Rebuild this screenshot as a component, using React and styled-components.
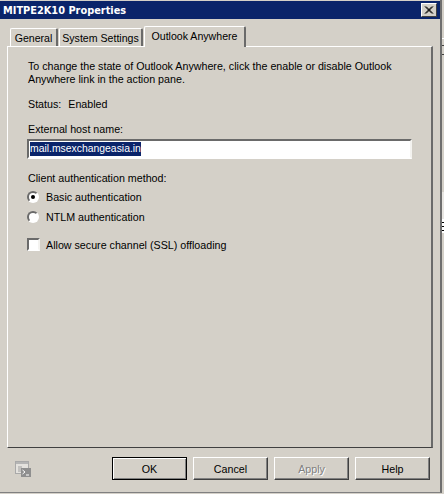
import React from "react";
import styled, { createGlobalStyle } from "styled-components";

const Global = createGlobalStyle`
  html, body { margin: 0; padding: 0; background: #d4d0c8; }
  #root { width: 444px; height: 494px; overflow: hidden; }
  * { box-sizing: border-box; }
`;

const Screen = styled.div`
  width: 444px;
  height: 494px;
  display: flex;
  background: #d4d0c8;
  font-family: "Liberation Sans", Arial, sans-serif;
  font-size: 10.7px;
  color: #000;
`;

const Dialog = styled.div`
  width: 442px;
  height: 493px;
  display: flex;
  flex-direction: column;
  background: #d4d0c8;
  border-right: 2px solid #6f6f6f;
  border-bottom: 1px solid #808080;
  padding-top: 1px;
`;

const Side = styled.div`
  flex: 1;
  display: flex;
  flex-direction: column;
`;

const SideStrip = styled.div`
  height: ${(p) => p.$h}px;
  background: ${(p) => p.$c};
`;

const TitleBar = styled.div`
  height: 18px;
  flex: none;
  background: #0a246a;
  color: #fff;
  display: flex;
  align-items: center;
  justify-content: space-between;
  padding: 0 3px 0 3px;
  font-family: "DejaVu Sans", sans-serif;
  font-weight: 700;
  font-size: 9.8px;
`;

const CloseButton = styled.div`
  width: 16px;
  height: 14px;
  background: #d4d0c8;
  border: 1px solid;
  border-color: #fff #404040 #404040 #fff;
  display: flex;
  align-items: center;
  justify-content: center;
`;

const TabStrip = styled.div`
  display: flex;
  align-items: flex-end;
  gap: 1px;
  height: 27px;
  flex: none;
  padding-left: 10px;
  position: relative;
  z-index: 1;
`;

const Tab = styled.div`
  height: ${(p) => (p.$active ? 21 : 18)}px;
  width: ${(p) => p.$w}px;
  margin-bottom: ${(p) => (p.$active ? -1 : 0)}px;
  background: #d4d0c8;
  border-top: 1px solid #fff;
  border-left: 1px solid #fff;
  border-right: 2px solid #6a6a6a;
  border-radius: 2px 2px 0 0;
  display: flex;
  align-items: ${(p) => (p.$active ? "flex-start" : "center")};
  justify-content: center;
  padding-top: ${(p) => (p.$active ? 3 : 0)}px;
  white-space: nowrap;
  font-size: 10.6px;
`;

const Panel = styled.div`
  margin: 0 7px 0 7px;
  height: 402px;
  flex: none;
  border-style: solid;
  border-width: 1px 2px 1px 1px;
  border-color: #fff #6a6a6a #404040 #fff;
  padding: 13px 19px 0 20px;
  display: flex;
  flex-direction: column;
`;

const Paragraph = styled.p`
  margin: 0;
  line-height: 13px;
  width: 372px;
`;

const Status = styled.div`
  margin-top: 12px;
  display: flex;
  gap: 7px;
  line-height: 13px;
`;

const Label = styled.div`
  line-height: 13px;
  margin-top: ${(p) => p.$mt}px;
`;

const HostInput = styled.div`
  margin-top: 3px;
  height: 20px;
  width: 385px;
  margin-left: -1px;
  background: #fff;
  border: 2px solid;
  border-color: #6a6a6a #f4f3f0 #fff #6a6a6a;
  display: flex;
  align-items: center;
  padding-left: 1px;
`;

const Selected = styled.span`
  background: #0a246a;
  color: #fff;
  font-size: 10.4px;
  line-height: 14px;
`;

const OptionRow = styled.div`
  display: flex;
  align-items: center;
  height: 13px;
  gap: ${(p) => p.$gap}px;
  margin-top: ${(p) => p.$mt}px;
  margin-left: -1px;
`;

const Radio = styled.span`
  width: 12px;
  height: 12px;
  border-radius: 50%;
  background: #fff;
  border: 2px solid;
  border-color: #6a6a6a #fff #fff #6a6a6a;
  display: flex;
  align-items: center;
  justify-content: center;
  flex: none;
  &::after {
    content: "";
    display: ${(p) => (p.$on ? "block" : "none")};
    width: 4px;
    height: 4px;
    border-radius: 50%;
    background: #000;
  }
`;

const Check = styled.span`
  width: 13px;
  height: 13px;
  background: #fff;
  border: 2px solid;
  border-color: #6a6a6a #f4f3f0 #fff #6a6a6a;
  flex: none;
`;

const Footer = styled.div`
  display: flex;
  align-items: flex-start;
  flex: 1;
  padding: 9px 10px 0 15px;
`;

const IconSlot = styled.div`
  margin-top: 4px;
  height: 16px;
  display: flex;
`;

const Buttons = styled.div`
  margin-left: auto;
  display: flex;
  gap: 6px;
`;

const Button = styled.div`
  width: 75px;
  height: 23px;
  background: #d4d0c8;
  border: 1px solid;
  border-color: ${(p) => (p.$def ? "#000" : "#fff #404040 #404040 #fff")};
  box-shadow: ${(p) => (p.$def ? "inset 1px 1px 0 #fff, inset -1px -1px 0 #808080" : "inset -1px -1px 0 #808080")};
  display: flex;
  align-items: center;
  justify-content: center;
  color: ${(p) => (p.$off ? "#808080" : "#000")};
  text-shadow: ${(p) => (p.$off ? "1px 1px 0 #fff" : "none")};
`;

const ShellIcon = () => (
  <svg width="16" height="16" viewBox="0 0 16 16">
    <rect x="0.5" y="0.5" width="13" height="12" fill="#e4e2de" stroke="#a9a9a9" />
    <rect x="1" y="1" width="12" height="2" fill="#b5b5b5" />
    <path d="M3 6h4M3 8h3M3 10h3" stroke="#a0a0a0" />
    <rect x="6" y="7" width="10" height="9" fill="#8f8f8f" />
    <path d="M7.5 9l2.5 2-2.5 2" stroke="#fff" fill="none" />
    <path d="M11 14h3" stroke="#fff" />
  </svg>
);

const strips = [
  [38, "#d4d0c8"], [1, "#ffffff"], [6, "#d4d0c8"], [1, "#404040"], [8, "#d4d0c8"], [1, "#404040"],
  [137, "#d4d0c8"], [27, "#e8e6e2"], [3, "#ffffff"], [1, "#000000"], [3, "#ffffff"], [1, "#000000"],
  [3, "#ffffff"], [1, "#000000"], [2, "#ffffff"], [261, "#d4d0c8"],
];

export default function App() {
  return (
    <Screen>
      <Global />
      <Dialog>
        <TitleBar>
          <span>MITPE2K10 Properties</span>
          <CloseButton>
            <svg width="10" height="9" viewBox="0 0 10 9">
              <path d="M1 0.5l7 7M2 0.5l7 7M8 0.5l-7 7M9 0.5l-7 7" stroke="#000" />
            </svg>
          </CloseButton>
        </TitleBar>
        <TabStrip>
          <Tab $w={48}>General</Tab>
          <Tab $w={84}>System Settings</Tab>
          <Tab $active $w={102}>Outlook Anywhere</Tab>
        </TabStrip>
        <Panel>
          <Paragraph>
            To change the state of Outlook Anywhere, click the enable or disable Outlook Anywhere link in the action pane.
          </Paragraph>
          <Status>
            <span>Status:</span>
            <span>Enabled</span>
          </Status>
          <Label $mt={12}>External host name:</Label>
          <HostInput>
            <Selected>mail.msexchangeasia.in</Selected>
          </HostInput>
          <Label $mt={13}>Client authentication method:</Label>
          <OptionRow $mt={5} $gap={7}>
            <Radio $on />
            <span>Basic authentication</span>
          </OptionRow>
          <OptionRow $mt={7} $gap={7}>
            <Radio />
            <span>NTLM authentication</span>
          </OptionRow>
          <OptionRow $mt={15} $gap={6}>
            <Check />
            <span>Allow secure channel (SSL) offloading</span>
          </OptionRow>
        </Panel>
        <Footer>
          <IconSlot>
            <ShellIcon />
          </IconSlot>
          <Buttons>
            <Button $def>OK</Button>
            <Button>Cancel</Button>
            <Button $off>Apply</Button>
            <Button>Help</Button>
          </Buttons>
        </Footer>
      </Dialog>
      <Side>
        {strips.map(([h, c], i) => (
          <SideStrip key={i} $h={h} $c={c} />
        ))}
      </Side>
    </Screen>
  );
}
